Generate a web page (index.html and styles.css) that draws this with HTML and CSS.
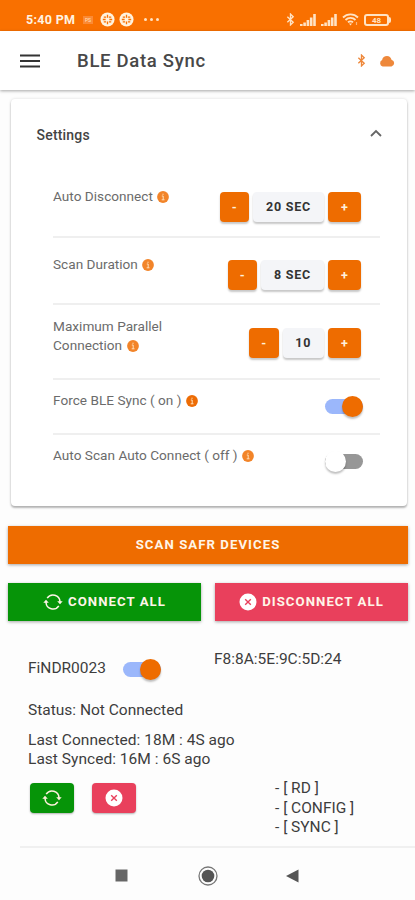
FILE: index.html
```html
<!DOCTYPE html>
<html lang="en">
<head>
<meta charset="utf-8">
<title>BLE Data Sync</title>
<link rel="stylesheet" href="styles.css">
</head>
<body>
<svg class="defs" width="0" height="0" aria-hidden="true">
  <symbol id="bt" viewBox="0 0 10 14"><path d="M1.500 4 8 10 5 13V1l3 3-6.500 6" fill="none" stroke="currentColor" stroke-width="1.500"/></symbol>
  <symbol id="signal" viewBox="0 0 16 12"><path d="M0 12v-2h2.600v2zM3.300 12V8.500h2.600V12zM6.600 12V6h2.600v6zM9.900 12V3.500h2.600V12zM13.200 12V0h2.600v12z" fill="currentColor"/></symbol>
  <symbol id="info" viewBox="0 0 12 12"><circle cx="6" cy="6" r="5.900" fill="currentColor"/><path d="M4.800 5H6.200V8.800M4.700 8.800H7.500M6 2.700v1.200" fill="none" stroke="#ffdfb8" stroke-width="1"/></symbol>
  <symbol id="sync" viewBox="0 0 20 18"><path d="M4.200 5.100A7 7 0 0 1 17 8.500V10M15.800 12.900A7 7 0 0 1 3 9.500V8" fill="none" stroke="currentColor" stroke-width="1.500"/><path d="M14.200 8.300h5.500L17 11.300zM.3 9.700h5.500L3 6.700z" fill="currentColor"/></symbol>
  <symbol id="close" viewBox="0 0 18 18"><circle cx="9" cy="9" r="8.500" fill="#fff"/><path d="m6.200 6.200 5.600 5.600m0-5.600-5.600 5.600" stroke="#e9405c" stroke-width="1.400"/></symbol>
  <symbol id="app" viewBox="0 0 16 16"><circle cx="8" cy="8" r="7.500" fill="#fff3df"/><path d="M8 3v3M8 10v3M3 8h3M10 8h3M4 5.500h2.500M9.500 5.500H12M4 10.500h2.500M9.500 10.500H12" stroke="#f97000" stroke-width="1.400"/></symbol>
</svg>

<div class="status-bar">
  <span class="clock">5:40 PM</span>
  <span class="badge">PS</span>
  <svg class="app"><use href="#app"/></svg>
  <svg class="app app-second"><use href="#app"/></svg>
  <span class="dots"><i></i><i></i><i></i></span>
  <div class="status-right">
    <svg width="9" height="13"><use href="#bt"/></svg>
    <svg width="16" height="12"><use href="#signal"/></svg>
    <svg width="16" height="12"><use href="#signal"/></svg>
    <svg width="17" height="13" viewBox="0 0 17 13" fill="none" stroke="currentColor" stroke-width="1.800"><path d="M1 4.500a10.500 10.500 0 0 1 15 0M3.500 7a7 7 0 0 1 10 0M6 9.400a3.500 3.500 0 0 1 5 0"/><path d="m7 10.500 1.500 2 1.500-2z" fill="currentColor" stroke="none"/><path d="M14.500 9v3" stroke-width="1.200" opacity=".6"/></svg>
    <span class="battery">48</span>
  </div>
</div>

<header class="toolbar">
  <svg class="menu" viewBox="0 0 20 14"><path d="M0 1.500h20M0 7h20M0 12.500h20" stroke="#333" stroke-width="1.800"/></svg>
  <h1>BLE Data Sync</h1>
  <div class="tools">
    <svg width="9" height="13"><use href="#bt"/></svg>
    <svg width="16" height="12" viewBox="0 0 16 12"><path d="M3.600 11.500a3.500 3.500 0 0 1-.5-6.500C3.500 2.500 5.500 1 8 1c2.300 0 4 1.500 4.500 3.700A3.500 3.500 0 0 1 12.500 11.500z" fill="currentColor"/></svg>
  </div>
</header>

<main>
  <section class="card">
    <div class="card-head"><h2>Settings</h2><svg width="12" height="8" viewBox="0 0 12 8"><path d="m1 7 5-5 5 5" fill="none" stroke="#666" stroke-width="1.800"/></svg></div>
    <div class="row r1">
      <p>Auto Disconnect <svg class="info soft"><use href="#info"/></svg></p>
      <div class="stepper"><button>-</button><span class="value w71">20 SEC</span><button class="plus">+</button></div>
    </div>
    <div class="row r2">
      <p>Scan Duration <svg class="info soft"><use href="#info"/></svg></p>
      <div class="stepper"><button>-</button><span class="value w63">8 SEC</span><button class="plus">+</button></div>
    </div>
    <div class="row r3">
      <p>Maximum Parallel<br>Connection <svg class="info soft"><use href="#info"/></svg></p>
      <div class="stepper"><button>-</button><span class="value w41">10</span><button class="plus">+</button></div>
    </div>
    <div class="row r4">
      <p>Force BLE Sync ( on ) <svg class="info"><use href="#info"/></svg></p>
      <span class="toggle on"></span>
    </div>
    <div class="row r5">
      <p>Auto Scan Auto Connect ( off ) <svg class="info soft"><use href="#info"/></svg></p>
      <span class="toggle"></span>
    </div>
  </section>

  <button class="action scan">SCAN SAFR DEVICES</button>
  <div class="pair">
    <button class="action connect"><svg width="20" height="18"><use href="#sync"/></svg>CONNECT ALL</button>
    <button class="action disconnect"><svg width="18" height="18"><use href="#close"/></svg>DISCONNECT ALL</button>
  </div>

  <section class="device">
    <div class="device-head">
      <span class="name">FiNDR0023</span><span class="toggle on"></span><span class="mac">F8:8A:5E:9C:5D:24</span>
    </div>
    <p class="state">Status: Not Connected</p>
    <p class="times">Last Connected: 18M : 4S ago<br>Last Synced: 16M : 6S ago</p>
    <div class="device-foot">
      <button class="mini green"><svg width="20" height="18"><use href="#sync"/></svg></button>
      <button class="mini red"><svg width="18" height="18"><use href="#close"/></svg></button>
      <div class="links">- [ RD ]<br>- [ CONFIG ]<br>- [ SYNC ]</div>
    </div>
  </section>
</main>

<nav>
  <svg width="13" height="13"><path d="M.5.5h12v12H.5z" fill="#666"/></svg>
  <svg width="20" height="20"><circle cx="10" cy="10" r="9" fill="none" stroke="#777" stroke-width="1.300"/><circle cx="10" cy="10" r="6.300" fill="#555"/></svg>
  <svg width="13" height="14"><path d="M0 7 12.500.5v13z" fill="#555"/></svg>
</nav>
</body>
</html>
```
FILE: styles.css
```css
* { box-sizing: border-box; }
body { margin: 0; width: 415px; height: 900px; overflow: hidden; background: #fdfdfd; color: #333; font-family: Roboto, "Liberation Sans", sans-serif; display: flex; flex-direction: column; }
svg { flex: none; display: block; }
.defs { position: absolute; }
h1, h2, p { margin: 0; font-weight: 400; }
button { border: 0; padding: 0; margin: 0; font: inherit; color: #fff0dc; }

.status-bar { height: 31px; flex: none; background: #f97000; color: #ffe3c4; display: flex; align-items: center; padding: 8px 24px 0 26px; }
.clock { font-size: 12.5px; font-weight: 700; width: 57px; white-space: nowrap; letter-spacing: .3px; color: #fff3e2; }
.badge { width: 10px; height: 8px; font-size: 5px; line-height: 8px; text-align: center; background: #fb8a35; }
.app { width: 15px; height: 15px; margin-left: 7px; }
.app-second { margin-left: 4px; }
.dots { display: flex; gap: 3px; margin-left: 10px; }
.dots i { width: 3px; height: 3px; background: #ffe3c4; border-radius: 50%; }
.status-right { margin-left: auto; display: flex; align-items: center; gap: 5px; }
.battery { position: relative; width: 25px; height: 12px; margin-right: 2px; border: 2px solid #ffe3c4; border-radius: 3px; font-size: 8px; font-weight: 700; line-height: 9px; text-align: center; }
.battery::after { content: ""; position: absolute; left: 23px; top: 1px; width: 2px; height: 6px; background: #ffe3c4; border-radius: 0 2px 2px 0; }

.toolbar { height: 59px; flex: none; background: #fff; box-shadow: 0 1px 3px rgba(0,0,0,.35); display: flex; align-items: center; padding: 0 20px; }
.menu { width: 20px; height: 14px; margin-top: 1px; }
h1 { font-size: 18.5px; font-weight: 500; letter-spacing: .7px; margin-left: 37px; color: #484848; }
.tools { margin-left: auto; display: flex; align-items: center; gap: 13px; color: #ee883b; }

main { flex: none; height: 758px; padding: 9px 7px 0 8px; display: flex; flex-direction: column; }
.card { height: 407px; flex: none; margin: 0 1px 0 3px; padding: 0 27px 0 42px; border-radius: 4px; background: #fff; box-shadow: 0 2px 2px rgba(0,0,0,.26), 0 0 3px rgba(0,0,0,.14); }
.card-head { height: 72px; margin: 0 -2px 0 -16.5px; display: flex; align-items: center; justify-content: space-between; }
.card-head svg { margin-top: -5px; }
h2 { font-size: 14px; font-weight: 500; letter-spacing: .2px; color: #444; }
.row { display: flex; justify-content: space-between; border-bottom: 2px solid #efefef; padding-right: 19px; color: #6b6b6b; }
.row p { font-size: 13.6px; line-height: 19px; letter-spacing: .02px; white-space: nowrap; }
.r1 { height: 67px; padding-top: 16px; }
.r2 { height: 67px; padding-top: 17px; }
.r3 { height: 75px; padding-top: 12px; }
.r4 { height: 55px; padding-top: 11px; }
.r5 { border: 0; height: 60px; padding-top: 11px; }
.row .toggle { margin: 5px -2px 0 0; }
.info { display: inline-block; width: 12px; height: 12px; vertical-align: -2px; color: #ed6c05; margin-left: 1px; }
.soft { color: #f28429; }
.stepper { display: flex; gap: 4px; height: 30px; margin-top: 5px; }
.r3 .stepper { margin-top: 11px; }
.stepper button, .value { border-radius: 4px; box-shadow: 0 2px 2px rgba(0,0,0,.22); font-size: 12.5px; font-weight: 700; }
.stepper button { width: 29.5px; background: #ee6c00; }
.stepper .plus { width: 33px; }
.value { background: #f4f5f8; color: #333; line-height: 29px; text-align: center; letter-spacing: .8px; white-space: nowrap; }
.w71 { width: 71px; }
.w63 { width: 63px; }
.w41 { width: 41.5px; }

.toggle { position: relative; width: 38px; height: 21px; flex: none; }
.toggle::before { content: ""; position: absolute; left: 0; right: 0; top: 3px; height: 15px; border-radius: 8px; background: #979797; }
.toggle::after { content: ""; position: absolute; left: 0; top: 0; width: 21px; height: 21px; border-radius: 50%; background: #fff; box-shadow: 0 2px 2px rgba(0,0,0,.25); }
.toggle.on::before { background: #9bb7fb; }
.toggle.on::after { left: 17px; background: #ee6c00; }

.action { height: 38px; display: flex; align-items: center; justify-content: center; padding-bottom: 2px; color: #fff5e8; font-size: 13.2px; font-weight: 700; letter-spacing: 1.05px; box-shadow: 0 1px 3px rgba(0,0,0,.35); white-space: nowrap; }
.scan { margin-top: 20px; flex: none; background: #ee6c00; }
.pair { display: flex; justify-content: space-between; margin-top: 19px; }
.pair .action { width: 193px; gap: 5px; padding-bottom: 1px; }
.connect, .green { background: #069408; }
.disconnect, .red { background: #e9405c; }

.device { margin: 24px -7px 0 12px; padding: 0 0 0 8px; flex: 1; border-bottom: 2px solid #f0f0f0; font-size: 15.5px; color: #3d3d3d; line-height: 19px; }
.device-head { display: flex; height: 56px; }
.name { width: 95px; padding-top: 14px; }
.device-head .toggle { margin-top: 14px; }
.mac { margin: 5px 0 0 53px; }
.state { white-space: nowrap; }
.times { margin-top: 10.500px; line-height: 19.400px; letter-spacing: .03px; white-space: nowrap; }
.device-foot { display: flex; margin-top: 10px; padding-left: 2px; }
.mini { width: 44px; height: 30px; margin: 4px 18px 0 0; border-radius: 4px; display: flex; align-items: center; justify-content: center; box-shadow: 0 1px 2px rgba(0,0,0,.3); }
.links { margin-left: 121px; line-height: 19.300px; white-space: nowrap; }

nav { flex: 1; display: flex; align-items: center; padding: 3px 0 0 115px; }
nav svg:nth-child(2) { margin-left: 70px; }
nav svg:nth-child(3) { margin-left: 68px; }
```
